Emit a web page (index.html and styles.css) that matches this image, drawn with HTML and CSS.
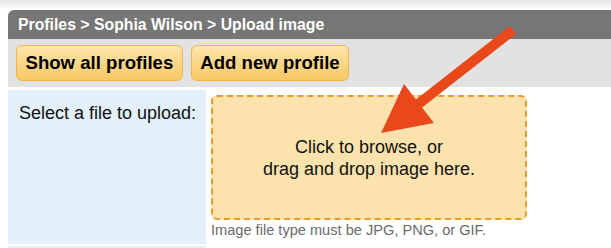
FILE: index.html
```html
<!DOCTYPE html>
<html>
<head>
    <title>Upload image</title>
    <link rel="stylesheet" href="styles.css">
</head>
<body>
    <div class="fade"></div>
    <div class="page">
        <div class="header">
            Profiles &gt; Sophia Wilson &gt; Upload image
        </div>
        <div class="toolbar">
            <button class="btn">Show all profiles</button>
            <button class="btn">Add new profile</button>
        </div>
        <div class="form">
            <div class="form-row">
                <div class="label">Select a file to upload:</div>
                <div class="field">
                    <div class="dropzone">
                        Click to browse, or<br>
                        drag and drop image here.
                    </div>
                    <div class="hint">Image file type must be JPG, PNG, or GIF.</div>
                </div>
            </div>
            <div class="form-row next">
                <div class="label"></div>
                <div class="field"></div>
            </div>
        </div>
    </div>

    <svg class="arrow" width="611" height="248" viewBox="0 0 611 248">
        <line x1="513" y1="30" x2="412" y2="109" stroke="#e9481a" stroke-width="10" />
        <polygon points="381,133 404,84 434,123" fill="#e9481a" />
    </svg>
</body>
</html>
```

FILE: styles.css
```css
* {
    margin: 0px;
    padding: 0px;
    box-sizing: border-box;
}
body {
    font-family: "Liberation Sans", Arial, sans-serif;
    background: #fff;
    height: 248px;
    overflow: hidden;
}
.fade {
    height: 10px;
    background: linear-gradient(#e6e6e6, #fff);
}
.page {
    margin-left: 8px;
}
.header {
    height: 29px;
    line-height: 29px;
    padding-left: 10px;
    background: #767676;
    color: #fff;
    font-weight: bold;
    font-size: 15.8px;
    border-top-left-radius: 6px;
}
.toolbar {
    height: 48px;
    padding: 6px 8px;
    background: #e2e2e2;
    display: flex;
    gap: 8px;
}
.toolbar .btn {
    height: 36px;
    padding: 0 8.5px;
    font-family: inherit;
    font-weight: bold;
    font-size: 18.6px;
    color: #000;
    border: 1px solid #f1b54c;
    border-radius: 6px;
    background: linear-gradient(#fde6ae, #f8c863);
}
.form {
    margin-top: 3px;
}
.form-row {
    display: grid;
    grid-template-columns: 198px 1fr;
    margin-bottom: 2px;
}
.form-row .label {
    background: #e3effb;
    padding: 13px 11px;
    font-size: 18px;
    color: #111;
    white-space: nowrap;
    overflow: hidden;
}
.form-row:first-child .label {
    height: 154px;
}
.form-row.next .label {
    height: 2px;
    padding: 0;
}
.form-row.next .field {
    padding: 0;
}
.field {
    padding: 5px 5px;
}
.dropzone {
    width: 316px;
    height: 125px;
    border: 2px dashed #e59c2a;
    border-radius: 6px;
    background: #fce3ae;
    display: flex;
    align-items: center;
    justify-content: center;
    text-align: center;
    font-size: 18px;
    line-height: 22px;
    color: #111;
}
.hint {
    margin-top: 2px;
    font-size: 14.6px;
    color: #6b6b6b;
}
.arrow {
    position: absolute;
    left: 0;
    top: 0;
}
```
